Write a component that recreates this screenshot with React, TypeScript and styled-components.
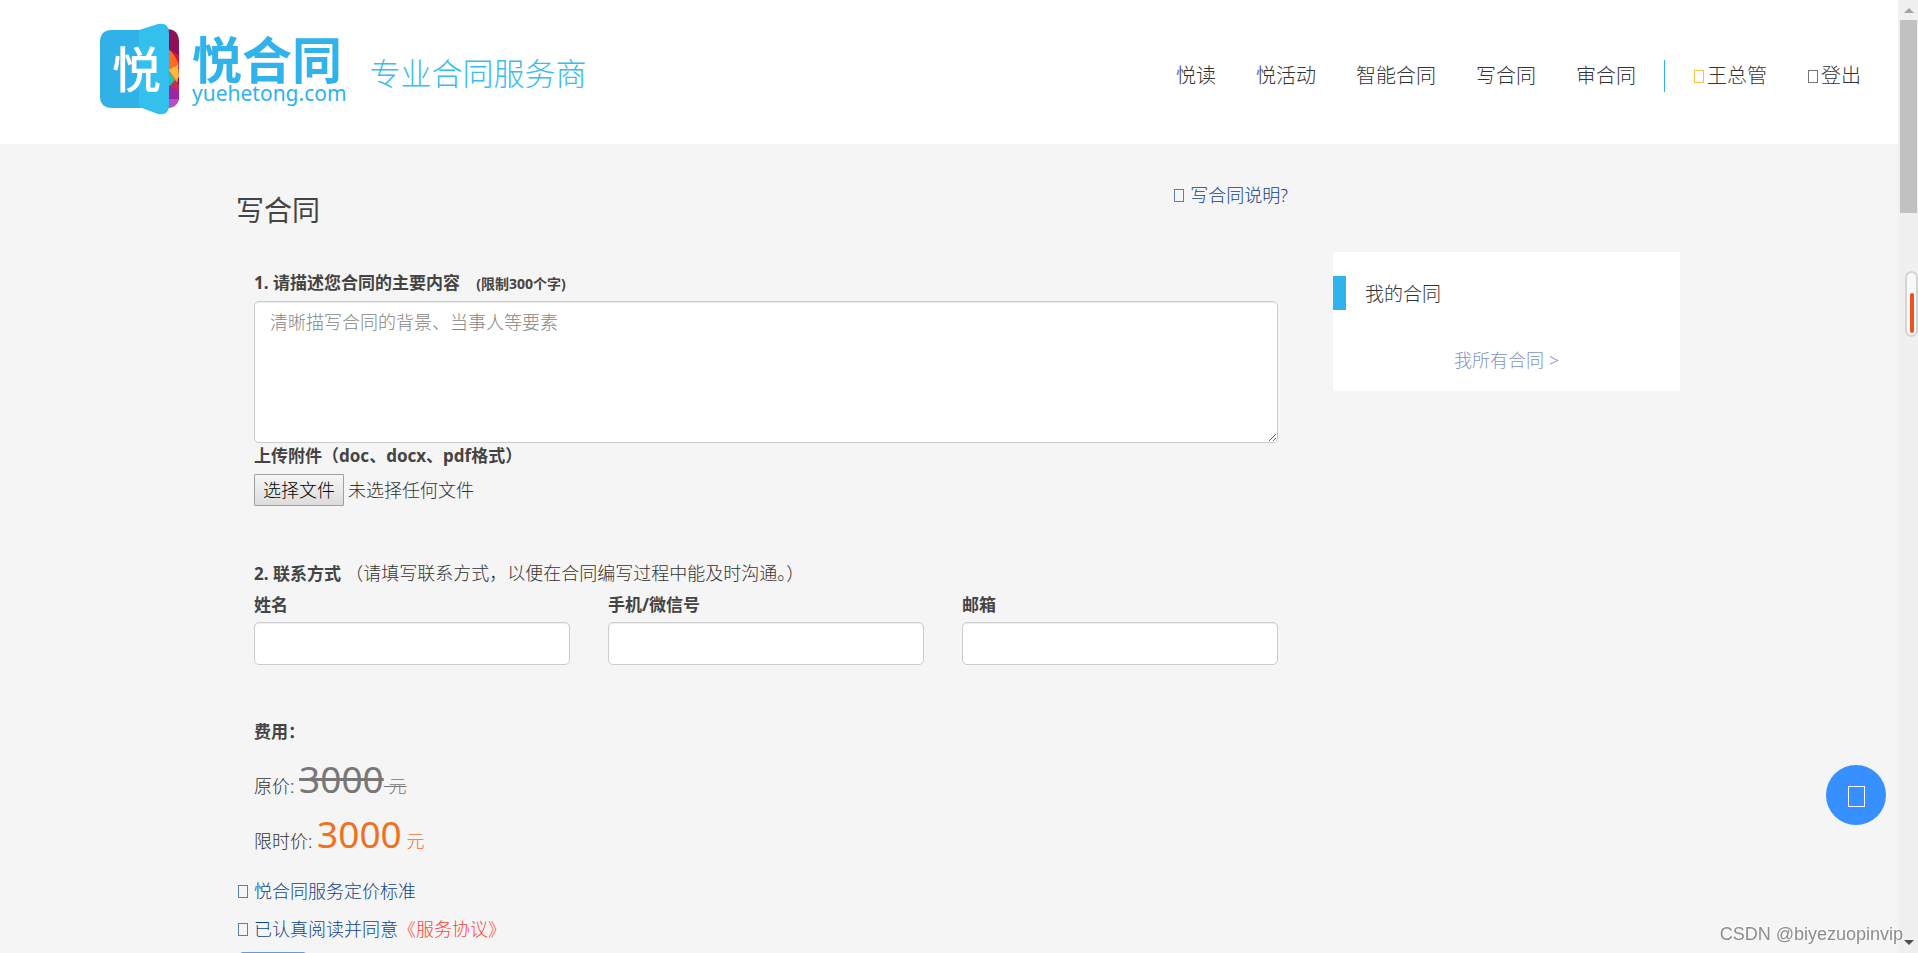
import React, { useRef, useState } from "react";
import styled, { createGlobalStyle } from "styled-components";

const GlobalStyle = createGlobalStyle`
  * { box-sizing: border-box; }
  body {
    margin: 0;
    background: #f5f5f5;
    color: #333;
    font-family: "Noto Sans", "Noto Sans CJK SC", sans-serif;
    font-size: 18px;
    font-weight: 300;
    line-height: 26px;
  }
  a { text-decoration: none; }
  button, input, textarea { font: inherit; }
`;

const Page = styled.div`
  height: 100vh;
  overflow: hidden;
`;

const Header = styled.header`
  display: flex;
  align-items: flex-start;
  height: 144px;
  padding: 23px 57px 0 100px;
  background: #fff;
`;

const Brand = styled.a`
  display: flex;
  gap: 13px;
  color: #2fb3ea;
`;

const BrandWords = styled.span`
  display: flex;
  flex-direction: column;
`;

const BrandName = styled.span`
  margin-top: 9px;
  font-family: "Noto Sans CJK SC", sans-serif;
  font-size: 50px;
  font-weight: 700;
  line-height: 51px;
`;

const BrandDomain = styled.span`
  font-family: "Noto Sans", sans-serif;
  font-size: 21px;
  font-weight: 400;
  line-height: 20px;
`;

const Slogan = styled.span`
  margin: 30px 0 0 23px;
  color: #38bdf0;
  font-size: 31px;
  line-height: 40px;
`;

const Nav = styled.nav`
  display: flex;
  align-items: center;
  gap: 40px;
  height: 32px;
  margin: 37px 0 0 auto;
  font-size: 20px;
`;

const NavLink = styled.a`
  display: flex;
  align-items: center;
  gap: 3px;
  color: #333;
`;

const Account = styled.div`
  display: flex;
  align-items: center;
  gap: 41px;
  height: 32px;
  margin-left: -12px;
  padding-left: 29px;
  border-left: 1px solid #2fb3ea;
`;

const Glyph = styled.span<{ $color: string; $large?: boolean }>`
  flex: none;
  width: ${(p) => (p.$large ? 17 : 10)}px;
  height: ${(p) => (p.$large ? 21 : 13)}px;
  border: 1px solid ${(p) => p.$color};
`;

const Container = styled.main`
  display: grid;
  grid-template-columns: minmax(0, 1fr) 347px;
  gap: 37px;
  align-items: start;
  max-width: 1474px;
  margin: 0 auto;
  padding: 40px 16px 0 14px;
`;

const TitleRow = styled.div`
  display: flex;
  align-items: flex-start;
  justify-content: space-between;
  padding-right: 8px;
`;

const Title = styled.h1`
  margin: 8px 0 0;
  color: #444;
  font-size: 28px;
  font-weight: 400;
  line-height: 36px;
`;

const IconLink = styled.a`
  display: flex;
  align-items: center;
  gap: 6px;
  color: #10428c;
  line-height: 22px;
`;

const Form = styled.form`
  padding: 42px 18px 0;
`;

const Label = styled.label`
  display: block;
  color: #444;
  font-size: 17px;
  font-weight: 700;
`;

const Legend = styled.div`
  color: #444;
  font-size: 17px;
  font-weight: 700;
`;

const Limit = styled.small`
  margin-left: 12px;
  font-size: 14px;
  line-height: 14px;
`;

const Hint = styled.span`
  color: #333;
  font-size: 18px;
  font-weight: 300;
  line-height: 18px;
`;

const Description = styled.textarea`
  display: block;
  width: 100%;
  height: 142px;
  margin-top: 5px;
  padding: 7px 15px;
  border: 1px solid #ccc;
  border-radius: 5px;
  background: #fff;
  box-shadow: inset 0 1px 1px rgba(0, 0, 0, 0.075);
  resize: vertical;
  &::placeholder { color: #858585; }
`;

const FileRow = styled.div`
  display: flex;
  align-items: center;
  gap: 4px;
  margin: 5px 0 55px;
`;

const FileButton = styled.button`
  height: 32px;
  padding: 0 8px;
  border: 1px solid #a0a0a0;
  border-radius: 1px;
  background: linear-gradient(#f6f6f6, #dcdcdc);
  color: #000;
  line-height: 28px;
`;

const Fields = styled.div`
  display: grid;
  grid-template-columns: repeat(3, minmax(0, 1fr));
  gap: 38px;
  margin: 5px 0 54px;
`;

const TextInput = styled.input`
  display: block;
  width: 100%;
  height: 43px;
  margin-top: 4px;
  padding: 6px 15px;
  border: 1px solid #ccc;
  border-radius: 5px;
  background: #fff;
  box-shadow: inset 0 1px 1px rgba(0, 0, 0, 0.075);
`;

const PriceList = styled.div`
  margin-top: 14px;
`;

const Price = styled.div`
  height: 55px;
  line-height: 55px;
`;

const Amount = styled.span<{ $sale?: boolean }>`
  color: ${(p) => (p.$sale ? "#f0701e" : "#777")};
  text-decoration: none;
`;

const Figure = styled.span<{ $struck?: boolean }>`
  font-size: 37px;
  font-weight: 400;
  line-height: 40px;
  text-decoration: ${(p) => (p.$struck ? "line-through" : "none")};
`;

const Unit = styled.span<{ $struck?: boolean }>`
  text-decoration: ${(p) => (p.$struck ? "line-through" : "none")};
`;

const Terms = styled.div`
  padding: 3px 0 0 2px;
`;

const TermLine = styled.div`
  display: flex;
  align-items: center;
  height: 38px;
`;

const Agreement = styled.a`
  color: #ff4433;
`;

const Submit = styled.button`
  width: 68px;
  height: 40px;
  margin: 4px 0 0 1px;
  border: 1px solid #6d9ac4;
  border-radius: 4px;
  background: #337ab7;
  color: #fff;
`;

const Card = styled.aside`
  margin-top: 68px;
  padding: 24px 0 17px;
  background: #fff;
`;

const CardTitle = styled.h2`
  margin: 0 0 37px;
  padding: 2px 0 0 19px;
  border-left: 13px solid #2fb3ea;
  font-size: 19px;
  font-weight: 300;
  line-height: 32px;
`;

const CardLink = styled.a`
  display: block;
  color: #8095cc;
  line-height: 27px;
  text-align: center;
`;

const ScrollTrack = styled.div`
  position: fixed;
  top: 0;
  right: 0;
  bottom: 0;
  display: flex;
  flex-direction: column;
  justify-content: space-between;
  align-items: center;
  width: 20px;
  padding: 8px 1px 8px 2px;
  background: #f0f0f0;
`;

const Thumb = styled.div`
  width: 17px;
  height: 193px;
  margin: 7px 0 auto;
  background: #c1c1c1;
`;

const Arrow = styled.div<{ $down?: boolean }>`
  border: 5px solid transparent;
  border-width: ${(p) => (p.$down ? "5px 5px 0" : "0 5px 5px")};
  border-top-color: ${(p) => (p.$down ? "#505050" : "transparent")};
  border-bottom-color: ${(p) => (p.$down ? "transparent" : "#a3a3a3")};
`;

const Gauge = styled.div`
  position: fixed;
  top: 271px;
  right: 0;
  display: flex;
  align-items: flex-end;
  justify-content: center;
  width: 13px;
  height: 66px;
  padding-bottom: 2px;
  border: 2px solid #d4d4d4;
  border-radius: 7px;
  background: #f9f9f9;
`;

const GaugeLevel = styled.div`
  width: 4px;
  height: 40px;
  border-radius: 2px;
  background: #f0521e;
`;

const FloatingButton = styled.button`
  position: fixed;
  right: 32px;
  bottom: 128px;
  display: flex;
  align-items: center;
  justify-content: center;
  width: 60px;
  height: 60px;
  padding: 3px 0 0;
  border: 0;
  border-radius: 50%;
  background: #3690ff;
`;

const Watermark = styled.div`
  position: fixed;
  right: 15px;
  bottom: 6px;
  color: #8c8c8c;
  font-family: "Liberation Sans", sans-serif;
  font-size: 18px;
  text-shadow: -1px -1px 0 #fff;
`;

const LogoMark = () => (
  <svg width="79" height="92" viewBox="0 0 79 92" aria-hidden="true">
    <defs>
      <clipPath id="pages">
        <path d="M60 6h6q13 0 13 13v54q0 12-13 12h-6z" />
      </clipPath>
    </defs>
    <g clipPath="url(#pages)">
      <rect x="60" width="19" height="92" fill="#8e1158" />
      <path d="M68 26l11 6v10L66 30z" fill="#d3173f" />
      <path d="M60 22q14 4 19 21l-19 7z" fill="#ff6c22" />
      <path d="M68 47l10-5 1 11-2 5z" fill="#fdb83c" />
      <path d="M68 48l10 10-2 4-10-9z" fill="#f98a2e" />
      <path d="M69 49v17l6-9z" fill="#1fc5a9" />
      <path d="M75 57l4 5v10l-11-7z" fill="#cc2750" />
      <path d="M68 62l11 6v8H68z" fill="#9d26a5" />
      <path d="M68 76h11v10H68z" fill="#b74fc5" />
    </g>
    <path d="M12 7h30v78H12Q0 85 0 73V19Q0 7 12 7z" fill="#30b1e8" />
    <path d="M39 7L58 1q11-2 11 9v72q0 11-11 9L39 84z" fill="#34c0ec" />
    <text x="12" y="65" fill="#fff" fontSize="49" fontWeight="500" fontFamily="Noto Sans CJK SC, sans-serif">
      悦
    </text>
  </svg>
);

const navItems = ["悦读", "悦活动", "智能合同", "写合同", "审合同"];
const contactFields = [
  { id: "name", label: "姓名" },
  { id: "phone", label: "手机/微信号" },
  { id: "email", label: "邮箱" },
];

export default function App() {
  const fileInput = useRef<HTMLInputElement>(null);
  const [fileName, setFileName] = useState("未选择任何文件");

  return (
    <Page>
      <GlobalStyle />
      <Header>
        <Brand href="#">
          <LogoMark />
          <BrandWords>
            <BrandName>悦合同</BrandName>
            <BrandDomain>yuehetong.com</BrandDomain>
          </BrandWords>
        </Brand>
        <Slogan>专业合同服务商</Slogan>
        <Nav>
          {navItems.map((item) => (
            <NavLink href="#" key={item}>{item}</NavLink>
          ))}
          <Account>
            <NavLink href="#"><Glyph $color="#fbbd4a" />王总管</NavLink>
            <NavLink href="#"><Glyph $color="#777" />登出</NavLink>
          </Account>
        </Nav>
      </Header>

      <Container>
        <section>
          <TitleRow>
            <Title>写合同</Title>
            <IconLink href="#"><Glyph $color="#5b7fb5" />写合同说明?</IconLink>
          </TitleRow>
          <Form id="contract" onSubmit={(e) => e.preventDefault()}>
            <Label htmlFor="description">
              1. 请描述您合同的主要内容 <Limit>(限制300个字)</Limit>
            </Label>
            <Description id="description" placeholder="清晰描写合同的背景、当事人等要素" />
            <Label htmlFor="attachment">上传附件（doc、docx、pdf格式）</Label>
            <FileRow>
              <FileButton type="button" onClick={() => fileInput.current?.click()}>选择文件</FileButton>
              <span>{fileName}</span>
              <input
                id="attachment"
                type="file"
                accept=".doc,.docx,.pdf"
                hidden
                ref={fileInput}
                onChange={(e) => setFileName(e.target.files?.[0]?.name ?? "未选择任何文件")}
              />
            </FileRow>

            <Legend>
              2. 联系方式 <Hint>（请填写联系方式，以便在合同编写过程中能及时沟通。）</Hint>
            </Legend>
            <Fields>
              {contactFields.map((field) => (
                <div key={field.id}>
                  <Label htmlFor={field.id}>{field.label}</Label>
                  <TextInput id={field.id} type="text" />
                </div>
              ))}
            </Fields>

            <Legend>费用：</Legend>
            <PriceList>
              <Price>
                原价: <Amount as="del"><Figure $struck>3000</Figure><Unit $struck> 元</Unit></Amount>
              </Price>
              <Price>
                限时价: <Amount $sale><Figure>3000</Figure><Unit> 元</Unit></Amount>
              </Price>
            </PriceList>
          </Form>
          <Terms>
            <TermLine>
              <IconLink href="#"><Glyph $color="#5b7fb5" />悦合同服务定价标准</IconLink>
            </TermLine>
            <TermLine>
              <IconLink href="#"><Glyph $color="#5b7fb5" />已认真阅读并同意</IconLink>
              <Agreement href="#">《服务协议》</Agreement>
            </TermLine>
            <Submit type="submit" form="contract">提交</Submit>
          </Terms>
        </section>

        <Card>
          <CardTitle>我的合同</CardTitle>
          <CardLink href="#">我所有合同 &gt;</CardLink>
        </Card>
      </Container>

      <FloatingButton type="button" aria-label="客服">
        <Glyph $color="#fff" $large />
      </FloatingButton>
      <ScrollTrack aria-hidden="true">
        <Arrow />
        <Thumb />
        <Arrow $down />
      </ScrollTrack>
      <Gauge aria-hidden="true"><GaugeLevel /></Gauge>
      <Watermark>CSDN @biyezuopinvip</Watermark>
    </Page>
  );
}
